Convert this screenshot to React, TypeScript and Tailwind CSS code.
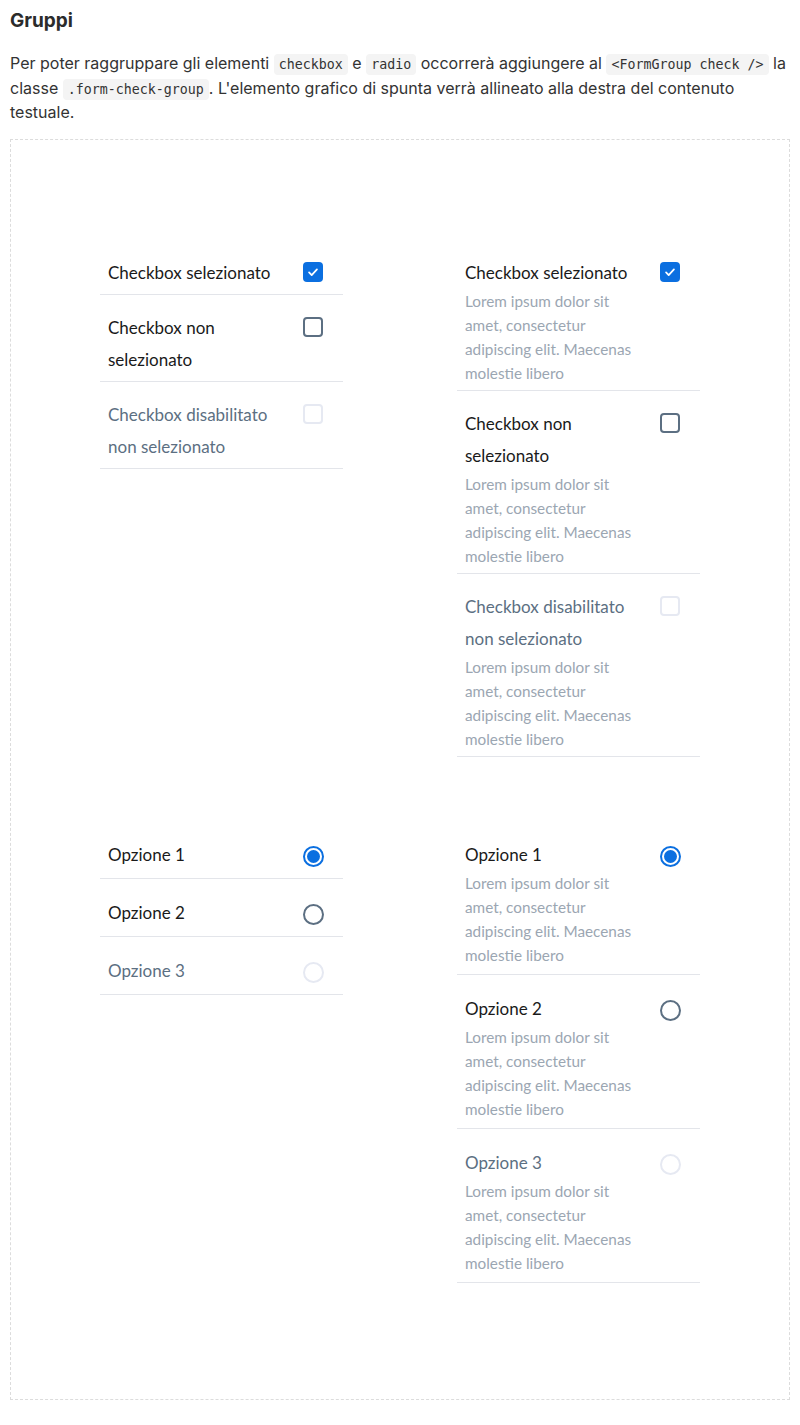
import React from 'react';

type Item = {
  label: string[];
  desc?: string[];
  state: 'checked' | 'unchecked' | 'disabled';
};

const LOREM = ['Lorem ipsum dolor sit', 'amet, consectetur', 'adipiscing elit. Maecenas', 'molestie libero'];

const checkboxes: Item[] = [
  { label: ['Checkbox selezionato'], state: 'checked' },
  { label: ['Checkbox non', 'selezionato'], state: 'unchecked' },
  { label: ['Checkbox disabilitato', 'non selezionato'], state: 'disabled' },
];

const radios: Item[] = [
  { label: ['Opzione 1'], state: 'checked' },
  { label: ['Opzione 2'], state: 'unchecked' },
  { label: ['Opzione 3'], state: 'disabled' },
];

function Checkbox({ state }: { state: Item['state'] }) {
  if (state === 'checked') {
    return (
      <span className="mt-[5px] flex h-5 w-5 shrink-0 items-center justify-center rounded-[4px] bg-[#0b6fe0]">
        <svg viewBox="0 0 16 16" className="h-3.5 w-3.5" fill="none" stroke="white" strokeWidth={2} strokeLinecap="round" strokeLinejoin="round">
          <path d="M3.5 8.5l3 3 6-6.5" />
        </svg>
      </span>
    );
  }
  return (
    <span
      className={
        state === 'unchecked'
          ? 'mt-[5px] h-5 w-5 shrink-0 rounded-[4px] border-2 border-[#5c6f82] bg-white'
          : 'mt-[5px] h-5 w-5 shrink-0 rounded-[4px] border-2 border-[#e6e9f2] bg-white'
      }
    />
  );
}

function Radio({ state }: { state: Item['state'] }) {
  if (state === 'checked') {
    return (
      <span className="mt-[7px] -mr-[1px] flex h-[21px] w-[21px] shrink-0 items-center justify-center rounded-full border-2 border-[#0b6fe0] bg-white">
        <span className="h-[13px] w-[13px] rounded-full bg-[#0b6fe0]" />
      </span>
    );
  }
  return (
    <span
      className={
        state === 'unchecked'
          ? 'mt-[7px] -mr-[1px] h-[21px] w-[21px] shrink-0 rounded-full border-2 border-[#5c6f82] bg-white'
          : 'mt-[7px] -mr-[1px] h-[21px] w-[21px] shrink-0 rounded-full border-2 border-[#e6e9f2] bg-white'
      }
    />
  );
}

function Group({ items, kind, withDesc }: { items: Item[]; kind: 'checkbox' | 'radio'; withDesc?: boolean }) {
  return (
    <div className="flex flex-col">
      {items.map((it, i) => (
        <div
          key={i}
          className={
            kind === 'checkbox'
              ? 'flex justify-between border-b border-[#e3e5ea] pl-2 pr-5 pt-[17px] pb-[5px]'
              : 'flex min-h-[58px] justify-between border-b border-[#e3e5ea] pl-2 pr-5 pt-[18px] pb-[7px]'
          }
        >
          <div className="flex flex-col">
            <div className={it.state === 'disabled' ? 'text-[17px] leading-8 text-[#5c6f82]' : 'text-[17px] leading-8 text-[#1a1a1a]'}>
              {it.label.map((l) => (
                <div key={l}>{l}</div>
              ))}
            </div>
            {withDesc && (
              <div className="text-[15.3px] leading-6 text-[#9ba6b2]">
                {LOREM.map((l) => (
                  <div key={l}>{l}</div>
                ))}
              </div>
            )}
          </div>
          {kind === 'checkbox' ? <Checkbox state={it.state} /> : <Radio state={it.state} />}
        </div>
      ))}
    </div>
  );
}

function Code({ children }: { children: React.ReactNode }) {
  return (
    <code className="rounded-[4px] bg-[#f4f4f4] px-[5px] py-[3px] font-['DejaVu_Sans_Mono',monospace] text-[13.3px] leading-none text-[#333]">
      {children}
    </code>
  );
}

export default function App() {
  return (
    <div className="min-h-[1425px] bg-white px-[10px] pt-[9px] font-['Inter',sans-serif] text-[#333]">
      <h2 className="text-[19px] font-bold leading-6 text-[#2b2b2b]">Gruppi</h2>
      <p className="mt-[18px] whitespace-nowrap text-[16px] leading-[24.5px] text-[#333]">
        Per poter raggruppare gli elementi <Code>checkbox</Code> e <Code>radio</Code> occorrerà aggiungere al{' '}
        <Code>{'<FormGroup check />'}</Code> la
        <br />
        classe <Code>.form-check-group</Code>. L'elemento grafico di spunta verrà allineato alla destra del contenuto
        <br />
        testuale.
      </p>

      <div className="mt-[14px] border border-dashed border-[#dcdcdc] px-[89px] pt-[100px] pb-[116px] font-['Lato',sans-serif]">
        <div className="grid grid-cols-2 items-start gap-x-[114px]">
          <Group items={checkboxes} kind="checkbox" />
          <Group items={checkboxes} kind="checkbox" withDesc />
        </div>
        <div className="mt-16 grid grid-cols-2 items-start gap-x-[114px]">
          <Group items={radios} kind="radio" />
          <Group items={radios} kind="radio" withDesc />
        </div>
      </div>
    </div>
  );
}
